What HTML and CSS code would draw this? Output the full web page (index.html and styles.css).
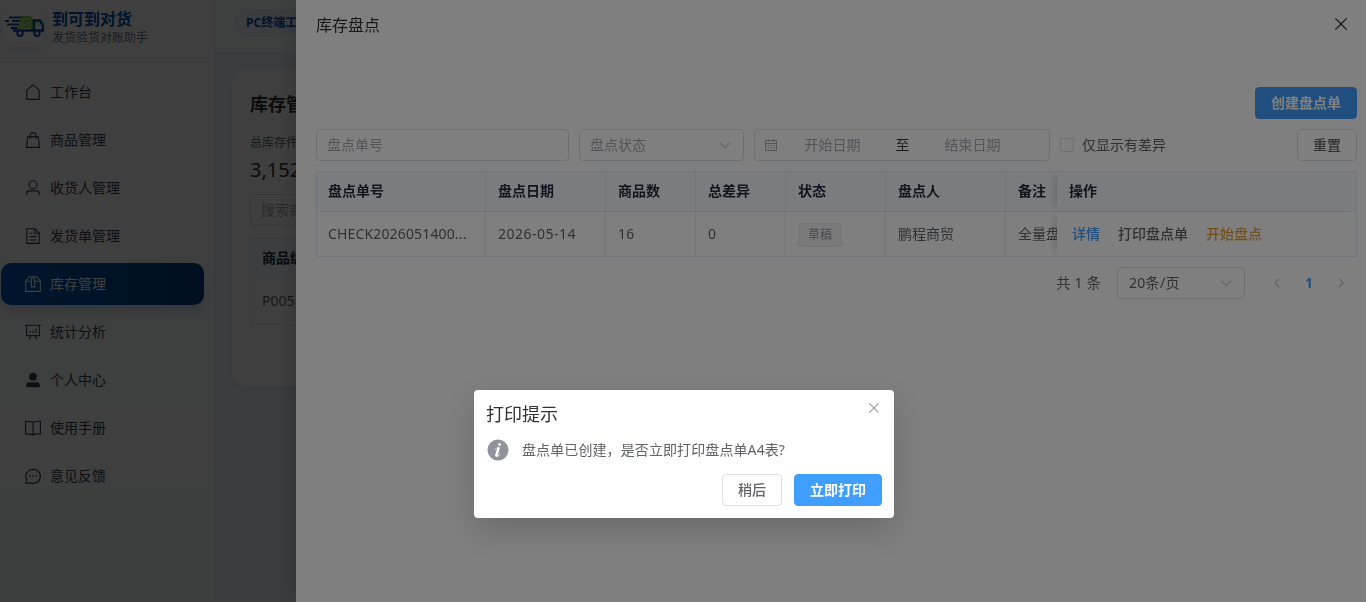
FILE: index.html
```
<!DOCTYPE html>
<html lang="zh-CN">
<head>
    <meta charset="UTF-8">
    <meta name="viewport" content="width=device-width, initial-scale=1.0">
    <title>到可到对货</title>
    <link rel="stylesheet" href="styles.css">
</head>
<body>
    <div class="app">
        <aside class="sidebar">
            <div class="brand">
                <div class="logo">
                    <svg viewBox="0 0 40 24" width="40" height="24" fill="none">
                        <path d="M5 3.500h12M8 7h8M1 7h4M3 10.500h12M7 14h7" stroke="#0b4ea2" stroke-width="1.900"/>
                        <path d="M17 2h9l3 3v12H14.500z" fill="#7ac943"/>
                        <path d="M18.500 5h6.500l1.500 1.500-1 8h-8z" stroke="#eaffd9" stroke-width=".9"/>
                        <path d="M19.500 10l2 2 3-4" stroke="#eaffd9"/>
                        <path d="M9 16.500h30v-5l-3-5h-6v10" stroke="#0b4ea2" stroke-width="2.600"/>
                        <path d="M31.500 8h3.500l2 3.500h-5.500z" fill="#cfe2ff"/>
                        <circle cx="16" cy="19.300" r="2.700" fill="#fff" stroke="#0b4ea2" stroke-width="2"/>
                        <circle cx="33" cy="19.300" r="2.700" fill="#fff" stroke="#0b4ea2" stroke-width="2"/>
                    </svg>
                </div>
                <div class="brand-text">
                    <b>到可到对货</b>
                    <span>发货验货对账助手</span>
                </div>
            </div>
            <nav class="menu">
                <a class="menu-item">
                    <svg class="icon" viewBox="0 0 1024 1024"><path d="M192 413.952V896h640V413.952L512 147.328zM139.52 374.4l352-293.312a32 32 0 0 1 40.96 0l352 293.312A32 32 0 0 1 896 398.976V928a32 32 0 0 1-32 32H160a32 32 0 0 1-32-32V398.976a32 32 0 0 1 11.52-24.576z"/></svg>
                    工作台
                </a>
                <a class="menu-item">
                    <svg class="icon line" viewBox="0 0 16 16"><path d="M3.300 5h9.400l1.100 9.500H2.200zM5.400 7V4a2.600 2.600 0 0 1 5.200 0v3"/></svg>
                    商品管理
                </a>
                <a class="menu-item">
                    <svg class="icon" viewBox="0 0 1024 1024"><path d="M512 512a192 192 0 1 0 0-384 192 192 0 0 0 0 384zm0 64a256 256 0 1 1 0-512 256 256 0 0 1 0 512zm320 320v-96a96 96 0 0 0-96-96H288a96 96 0 0 0-96 96v96a32 32 0 1 1-64 0v-96a160 160 0 0 1 160-160h448a160 160 0 0 1 160 160v96a32 32 0 1 1-64 0z"/></svg>
                    收货人管理
                </a>
                <a class="menu-item">
                    <svg class="icon" viewBox="0 0 1024 1024"><path d="M832 384H576V128H192v768h640zm-26.496-64L640 154.496V320zM160 64h480l256 256v608a32 32 0 0 1-32 32H160a32 32 0 0 1-32-32V96a32 32 0 0 1 32-32zm160 448h384v64H320zm0-192h160v64H320zm0 384h384v64H320z"/></svg>
                    发货单管理
                </a>
                <a class="menu-item active">
                    <svg class="icon line" viewBox="0 0 16 16"><path d="M4.800 1.500h6.400l3.300 3.700v9.300h-13V5.200zM1.500 5.500h5M9.500 5.500h5M7.300 1.500l-.8 3.800v5.200h3V5.300l-.8-3.800"/></svg>
                    库存管理
                </a>
                <a class="menu-item">
                    <svg class="icon line" viewBox="0 0 16 16"><path d="M1 2h14M2.300 2v9.200h11.400V2M6.200 11.300l-1.800 3.400M9.800 11.300l1.800 3.400M5.300 8.800V7.300M8 8.800V6.500M10.700 8.800V4.800"/></svg>
                    统计分析
                </a>
                <a class="menu-item">
                    <svg class="icon" viewBox="0 0 1024 1024"><path d="M288 320a224 224 0 1 0 448 0 224 224 0 1 0-448 0zm544 608H160a32 32 0 0 1-32-32v-96a160 160 0 0 1 160-160h448a160 160 0 0 1 160 160v96a32 32 0 0 1-32 32z"/></svg>
                    个人中心
                </a>
                <a class="menu-item">
                    <svg class="icon line" viewBox="0 0 16 16"><path d="M8 2.900v11.200M8 2.900C6 2 3.500 1.900 1.400 2v11.200c2.100-.1 4.600 0 6.600.9 2-.9 4.500-1 6.600-.9V2C12.500 1.900 10 2 8 2.900z"/></svg>
                    使用手册
                </a>
                <a class="menu-item">
                    <svg class="icon line" viewBox="0 0 16 16"><path d="M2.500 11.500A6.500 6.200 0 1 1 5.200 13.900l-3.600.5z"/><path class="dots" d="M4.500 8h1.300M7.350 8h1.300M10.200 8h1.300"/></svg>
                    意见反馈
                </a>
            </nav>
        </aside>
        <main class="main">
            <header class="topbar"><span class="pill">PC终端工作台</span></header>
            <section class="card">
                <h2>库存管理</h2>
                <div class="stat-label">总库存件数</div>
                <div class="stat-value">3,152</div>
                <div class="search">搜索商品</div>
                <div class="goods">
                    <div class="goods-head">商品编号</div>
                    <div class="goods-row">P005</div>
                </div>
            </section>
        </main>
    </div>

    <div class="overlay"></div>
    <div class="drawer">
        <header class="drawer-header">
            <span>库存盘点</span>
            <svg width="20" height="20" viewBox="0 0 1024 1024"><path d="M764.288 214.592 512 466.88 259.712 214.592a31.936 31.936 0 0 0-45.12 45.12L466.752 512 214.528 764.224a31.936 31.936 0 1 0 45.12 45.184L512 557.184l252.288 252.288a31.936 31.936 0 0 0 45.12-45.12L557.12 512.064l252.288-252.352a31.936 31.936 0 1 0-45.12-45.184z"/></svg>
        </header>
        <div class="drawer-body">
            <div class="actions"><button class="btn primary">创建盘点单</button></div>
            <div class="filters">
                <div class="input w-no">盘点单号</div>
                <div class="input w-status">
                    <span>盘点状态</span>
                    <svg class="arrow" viewBox="0 0 14 14"><path d="M2 4.700l5 4.900 5-4.900"/></svg>
                </div>
                <div class="input w-date">
                    <svg class="calendar" viewBox="0 0 14 14"><path d="M1.500 2.500h11v10h-11zM1.500 5.500h11M4.500 1v2.500M9.500 1v2.500M3.500 7.700h1.500M6.300 7.700h1.500M9 7.700h1.500M3.500 10h1.500M6.300 10h1.500M9 10h1.500"/></svg>
                    <span class="date">开始日期</span>
                    <span class="to">至</span>
                    <span class="date">结束日期</span>
                </div>
                <label class="check"><i></i>仅显示有差异</label>
                <button class="btn reset">重置</button>
            </div>
            <div class="table">
                <div class="row head">
                    <div>盘点单号</div>
                    <div>盘点日期</div>
                    <div>商品数</div>
                    <div>总差异</div>
                    <div>状态</div>
                    <div>盘点人</div>
                    <div class="remark">备注</div>
                    <div class="fixed">操作</div>
                </div>
                <div class="row">
                    <div class="num">CHECK2026051400...</div>
                    <div class="day">2026-05-14</div>
                    <div class="num">16</div>
                    <div class="num">0</div>
                    <div><span class="tag">草稿</span></div>
                    <div>鹏程商贸</div>
                    <div class="remark">全量盘</div>
                    <div class="fixed ops">
                        <a class="blue">详情</a>
                        <a>打印盘点单</a>
                        <a class="orange">开始盘点</a>
                    </div>
                </div>
            </div>
            <div class="pagination">
                <span class="total">共 1 条</span>
                <div class="input w-size">
                    <span>20条/页</span>
                    <svg class="arrow" viewBox="0 0 14 14"><path d="M2 4.700l5 4.900 5-4.900"/></svg>
                </div>
                <div class="pager">
                    <svg viewBox="0 0 12 12"><path d="M8 1.500L4 6l4 4.500"/></svg>
                    <b>1</b>
                    <svg viewBox="0 0 12 12"><path d="M4 1.500L8 6l-4 4.500"/></svg>
                </div>
            </div>
        </div>
    </div>

    <div class="overlay box-wrap">
        <div class="message-box">
            <div class="box-header">
                <span>打印提示</span>
                <svg width="16" height="16" viewBox="0 0 1024 1024"><path d="M764.288 214.592 512 466.88 259.712 214.592a31.936 31.936 0 0 0-45.12 45.12L466.752 512 214.528 764.224a31.936 31.936 0 1 0 45.12 45.184L512 557.184l252.288 252.288a31.936 31.936 0 0 0 45.12-45.12L557.12 512.064l252.288-252.352a31.936 31.936 0 1 0-45.12-45.184z"/></svg>
            </div>
            <div class="box-content">
                <svg width="24" height="24" viewBox="0 0 1024 1024"><path d="M512 64a448 448 0 1 1 0 896.064A448 448 0 0 1 512 64zm67.2 275.072c33.28 0 60.288-23.104 60.288-57.344s-27.072-57.344-60.288-57.344c-33.28 0-60.16 23.104-60.16 57.344s26.88 57.344 60.16 57.344zM590.912 699.2c0-6.848 2.368-24.64 1.024-34.752l-52.608 60.544c-10.88 11.456-24.512 19.392-30.912 17.28a12.992 12.992 0 0 1-8.256-14.72l87.68-276.992c7.168-35.136-12.544-67.2-54.336-71.296-44.096 0-108.992 44.736-148.48 101.504 0 6.784-1.280 23.680.064 33.792l52.544-60.608c10.880-11.328 23.552-19.328 29.952-17.152a12.800 12.800 0 0 1 7.808 16.128L388.480 728.576c-10.048 32.256 8.960 63.872 55.040 71.040 67.840 0 107.904-43.648 147.456-100.416z"/></svg>
                <p>盘点单已创建，是否立即打印盘点单A4表?</p>
            </div>
            <div class="box-btns">
                <button class="btn">稍后</button>
                <button class="btn primary">立即打印</button>
            </div>
        </div>
    </div>
</body>
</html>
```
FILE: styles.css
```
* {
  box-sizing: border-box;
}

body {
  margin: 0;
  height: 602px;
  overflow: hidden;
  font-family: "Noto Sans", "Noto Sans CJK SC", sans-serif;
  font-size: 14px;
  color: #303133;
}

.app {
  display: flex;
  height: 602px;
}

/* sidebar */
.sidebar {
  width: 215px;
  flex-shrink: 0;
  border-right: 1px solid #dfe6f2;
  background: linear-gradient(180deg, #ffffff 0%, #fcfefe 50%, #f5fbf8 100%);
}

.brand {
  display: flex;
  height: 62px;
  padding: 5px 0 0 3px;
  border-bottom: 1px solid #e8eef8;
}

.logo {
  display: flex;
  width: 41px;
  height: 42px;
  border-radius: 10px;
  align-items: center;
  justify-content: center;
  box-shadow: 0 4px 10px rgba(11, 78, 162, 0.15);
}

.logo svg {
  flex-shrink: 0;
}

.brand-text {
  display: flex;
  flex-direction: column;
  margin-left: 8px;
  padding-top: 3px;
}

.brand-text b {
  font-size: 16px;
  line-height: 22px;
  color: #0050b0;
}

.brand-text span {
  font-size: 12px;
  line-height: 16px;
  color: #64748b;
}

.menu {
  padding: 9px 10px 0 1px;
}

.menu-item {
  display: flex;
  align-items: center;
  gap: 8px;
  height: 42px;
  margin-bottom: 6px;
  padding: 0 0 2px 23px;
  border-radius: 10px;
  color: #334155;
}

.menu-item.active {
  color: #fff;
  background: linear-gradient(90deg, #0056b8, #003f80);
  box-shadow: 0 6px 14px rgba(0, 86, 184, 0.22);
}

.icon {
  width: 18px;
  height: 18px;
  margin-top: 2px;
  fill: currentColor;
}

.line {
  fill: none;
  stroke: currentColor;
  stroke-width: 1;
}

.dots {
  stroke-width: 1.3;
}

/* page behind the drawer */
.main {
  flex: 1;
  background: #eef3fb;
}

.topbar {
  height: 53px;
  padding: 10px 20px;
  background: #fbfcff;
  border-bottom: 1px solid #e6edf8;
}

.pill {
  display: inline-block;
  height: 26px;
  line-height: 24px;
  padding: 0 10px;
  border: 1px solid #dbe8fa;
  border-radius: 13px;
  background: #f0f6ff;
  font-size: 12px;
  font-weight: bold;
  color: #0050b0;
}

.card {
  height: 316px;
  margin: 17px 17px 0;
  padding: 21px 18px;
  border-radius: 14px;
  background: #fff;
  box-shadow: 0 4px 14px rgba(30, 64, 120, 0.06);
}

.card h2 {
  margin: 0;
  font-size: 18px;
  line-height: 26px;
}

.stat-label {
  margin-top: 17px;
  font-size: 12px;
  line-height: 18px;
  color: #606266;
}

.stat-value {
  font-size: 20px;
  line-height: 36px;
}

.search {
  height: 32px;
  margin-top: 6px;
  padding-left: 10px;
  border: 1px solid #dcdfe6;
  border-radius: 4px;
  line-height: 29px;
  color: #a8abb2;
}

.goods {
  margin-top: 12px;
  border: 1px solid #ebeef5;
}

.goods-head {
  height: 40px;
  padding-left: 11px;
  line-height: 38px;
  font-weight: bold;
  color: #1e293b;
  background: #f6f9ff;
}

.goods-row {
  height: 45px;
  padding-left: 11px;
  line-height: 43px;
  color: #606266;
}

/* drawer */
.overlay {
  position: fixed;
  inset: 0;
  background: rgba(0, 0, 0, 0.5);
}

.drawer {
  position: fixed;
  top: 0;
  right: 0;
  width: 1070px;
  height: 602px;
  background: #fff;
  box-shadow: 0 0 22px rgba(0, 0, 0, 0.24);
}

.drawer-header {
  display: flex;
  align-items: center;
  justify-content: space-between;
  height: 47px;
  padding: 0 15px 0 20px;
  font-size: 16px;
}

.drawer-header svg {
  fill: #303133;
}

.drawer-body {
  padding: 40px 9px 0 20px;
}

.actions {
  display: flex;
  justify-content: flex-end;
}

.btn {
  height: 32px;
  padding: 0 15px;
  border: 1px solid #dcdfe6;
  border-radius: 4px;
  background: #fff;
  font-family: inherit;
  font-size: 14px;
  font-weight: 500;
  line-height: 28px;
  color: #606266;
}

.btn.primary {
  border-color: #409eff;
  background: #409eff;
  font-weight: bold;
  color: #fff;
}

.filters {
  display: flex;
  align-items: center;
  margin-top: 10px;
}

.input {
  display: flex;
  align-items: center;
  justify-content: space-between;
  height: 32px;
  padding: 0 11px 2px 10px;
  border: 1px solid #dcdfe6;
  border-radius: 4px;
  color: #a8abb2;
}

.w-no {
  width: 253px;
}

.w-status {
  width: 165px;
  margin-left: 10px;
}

.w-date {
  width: 296px;
  margin-left: 10px;
  padding: 0 10px 2px 9px;
  justify-content: flex-start;
}

.arrow,
.calendar {
  width: 14px;
  height: 14px;
  margin-top: 2px;
  fill: none;
  stroke: #a8abb2;
  stroke-width: 1;
}

.date {
  width: 109px;
  text-align: center;
}

.to {
  width: 31px;
  text-align: center;
  color: #303133;
}

.check {
  display: flex;
  align-items: center;
  gap: 8px;
  margin-left: 10px;
  line-height: 30px;
  color: #606266;
}

.check i {
  width: 14px;
  height: 14px;
  border: 1px solid #dcdfe6;
  border-radius: 2px;
}

.reset {
  margin-left: auto;
}

.table {
  margin-top: 10px;
  border: 1px solid #e2e8f2;
  border-right: 0;
  overflow: hidden;
}

.row {
  display: grid;
  grid-template-columns: 169px 120px 90px 90px 100px 120px 51px 300px;
  height: 44px;
  line-height: 44px;
  color: #606266;
}

.row > div {
  padding-left: 12px;
  border-right: 1px solid #e2e8f2;
  white-space: nowrap;
}

.row > div:first-child {
  padding-left: 11px;
}

.row > .remark {
  border-right: 0;
}

.row > .fixed {
  background: #fff;
  box-shadow: -6px 0 8px -4px rgba(0, 0, 0, 0.16);
}

.head {
  height: 40px;
  line-height: 37px;
  border-bottom: 1px solid #dbe6f5;
  background: #f5f9ff;
  font-weight: bold;
  color: #1e293b;
}

.row.head > .fixed {
  background: #f5f9ff;
}

.num {
  letter-spacing: 0.15px;
}

.day {
  letter-spacing: 0.5px;
}

.tag {
  display: inline-block;
  height: 24px;
  padding: 0 9px;
  border: 1px solid #e9e9eb;
  border-radius: 4px;
  background: #f4f4f5;
  font-size: 12px;
  line-height: 22px;
  vertical-align: 0;
  color: #909399;
}

.row > .ops {
  display: flex;
  gap: 18px;
  padding-left: 15px;
  font-weight: 500;
}

.blue {
  color: #409eff;
}

.orange {
  color: #e6a23c;
}

.pagination {
  display: flex;
  align-items: center;
  justify-content: flex-end;
  margin-top: 10px;
  color: #606266;
}

.total {
  padding-bottom: 2px;
  letter-spacing: 0.3px;
}

.w-size {
  width: 128px;
  margin-left: 16px;
  padding-left: 11px;
  color: #606266;
}

.w-size span {
  letter-spacing: 0.3px;
}

.pager {
  display: flex;
  align-items: center;
  justify-content: space-between;
  width: 76px;
  margin: 0 10px 0 26px;
}

.pager svg {
  width: 12px;
  height: 12px;
  fill: none;
  stroke: #a8abb2;
}

.pager b {
  padding-bottom: 2px;
  color: #409eff;
}

/* confirm box */
.box-wrap {
  display: flex;
  justify-content: center;
  align-items: flex-start;
  padding: 390px 0 0 2px;
}

.message-box {
  width: 420px;
  height: 128px;
  padding: 12px;
  border-radius: 4px;
  background: #fff;
  box-shadow: 0 12px 32px rgba(0, 0, 0, 0.16);
}

.box-header {
  display: flex;
  justify-content: space-between;
  height: 36px;
  font-size: 18px;
  line-height: 24px;
}

.box-header svg {
  margin: -2px 0 0;
  fill: #909399;
}

.box-content {
  display: flex;
  align-items: center;
  gap: 12px;
  height: 24px;
}

.box-content svg {
  fill: #909399;
}

.box-content p {
  margin: 0;
  padding-bottom: 2px;
  letter-spacing: 0.1px;
  color: #606266;
}

.box-btns {
  display: flex;
  justify-content: flex-end;
  gap: 12px;
  margin-top: 12px;
}
```
